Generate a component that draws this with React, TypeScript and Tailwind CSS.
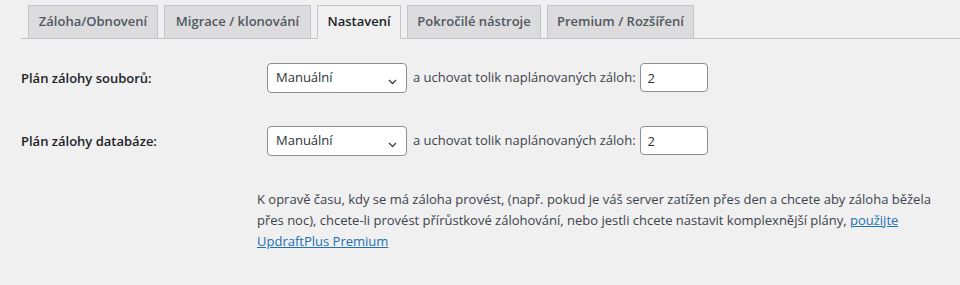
import React from "react";

const tabs = [
  { label: "Záloha/Obnovení", width: "w-[130px]", active: false },
  { label: "Migrace / klonování", width: "w-[147px]", active: false },
  { label: "Nastavení", width: "w-[84px]", active: true },
  { label: "Pokročilé nástroje", width: "w-[134px]", active: false },
  { label: "Premium / Rozšíření", width: "w-[147px]", active: false },
];

const Chevron = () => (
  <svg viewBox="0 0 9 6" className="absolute right-[10px] top-[16px] h-[6px] w-[9px] pointer-events-none">
    <path d="M1 1l3.5 3.5L8 1" fill="none" stroke="#3c434a" strokeWidth="1.4" />
  </svg>
);

const ScheduleRow = ({ label, className }: { label: string; className?: string }) => (
  <div className={`flex items-start ${className ?? ""}`}>
    <div className="w-[246px] shrink-0 pt-[5px] font-semibold text-[#1d2327] leading-[20px]">{label}</div>
    <div className="flex items-center">
      <div className="relative">
        <select
          defaultValue="manual"
          className="h-[30px] w-[140px] appearance-none rounded-[4px] border border-[#8c8f94] bg-white pl-[8px] pr-[24px] text-[13px] text-[#2c3338] outline-none"
        >
          <option value="manual">Manuální</option>
        </select>
        <Chevron />
      </div>
      <span className="ml-[6px] mr-[4px] whitespace-nowrap">a uchovat tolik naplánovaných záloh:</span>
      <input
        type="text"
        defaultValue="2"
        className="-mt-[1px] h-[29px] w-[68px] rounded-[4px] border border-[#8c8f94] bg-white px-[7px] text-[13px] text-[#2c3338] outline-none"
      />
    </div>
  </div>
);

export default function App() {
  return (
    <div className="min-h-[285px] bg-[#f0f0f1] font-['Open_Sans',sans-serif] text-[13px] text-[#3c434a]">
      <nav className="ml-[21px] flex gap-[6px] border-b border-[#c3c4c7] pl-[7px] pt-[5px]">
        {tabs.map((tab) => (
          <div
            key={tab.label}
            className={`-mb-px flex h-[34px] ${tab.width} items-center justify-center border border-[#c3c4c7] text-[13px] font-semibold ${
              tab.active
                ? "border-b-[#f0f0f1] bg-[#f0f0f1] text-[#1d2327]"
                : "bg-[#dcdcde] text-[#50575e]"
            }`}
          >
            {tab.label}
          </div>
        ))}
      </nav>

      <div className="px-[21px]">
        <ScheduleRow label="Plán zálohy souborů:" className="mt-[24px]" />
        <ScheduleRow label="Plán zálohy databáze:" className="mt-[33px]" />

        <p className="ml-[236px] mt-[33px] w-[695px] leading-[21px]">
          K opravě času, kdy se má záloha provést, (např. pokud je váš server zatížen přes den a chcete aby záloha běžela
          přes noc), chcete-li provést přírůstkové zálohování, nebo jestli chcete nastavit komplexnější plány,{" "}
          <a href="#" className="text-[#2271b1] underline">
            použijte
          </a>{" "}
          <a href="#" className="text-[#2271b1] underline">
            UpdraftPlus Premium
          </a>
        </p>
      </div>
    </div>
  );
}
